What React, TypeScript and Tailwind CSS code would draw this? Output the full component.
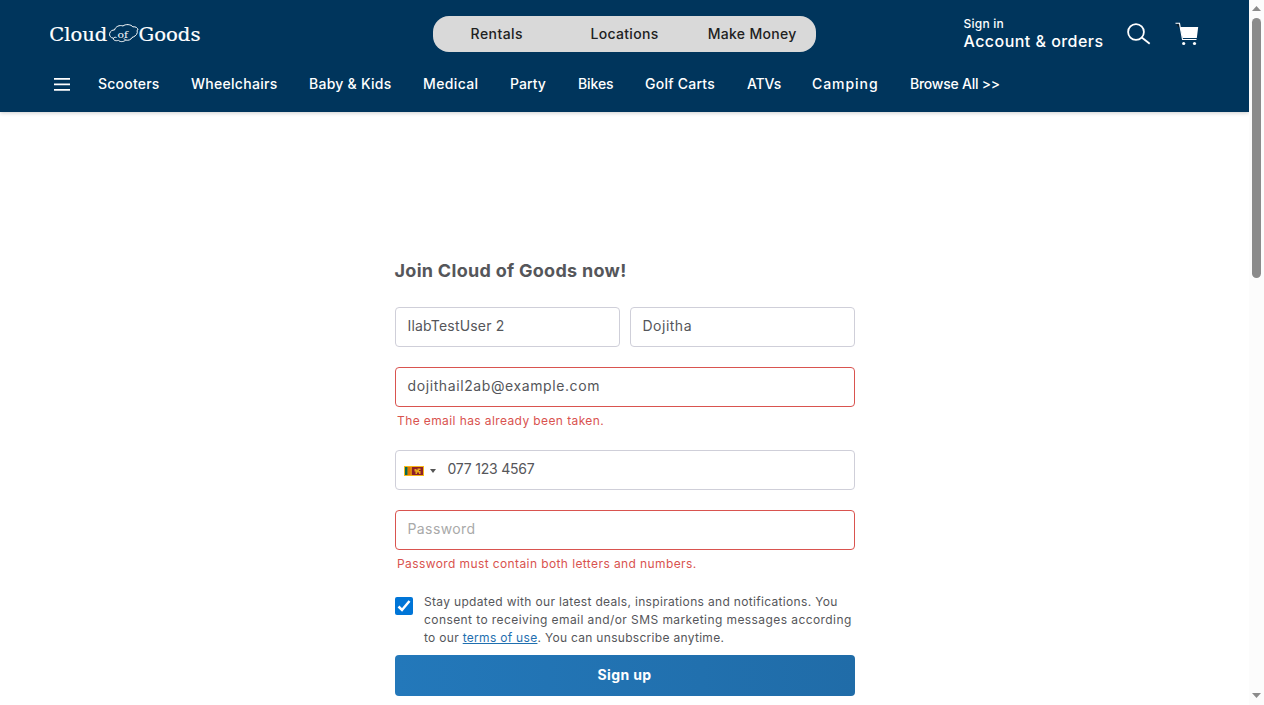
const categories = [
  { label: "Scooters", box: "w-[93px]", track: "tracking-[0.21px]" },
  { label: "Wheelchairs", box: "w-[118px]", track: "tracking-[0.28px]" },
  { label: "Baby & Kids", box: "w-[114px]", track: "tracking-[0.25px]" },
  { label: "Medical", box: "w-[87px]", track: "tracking-[0.37px]" },
  { label: "Party", box: "w-[68px]", track: "tracking-[0.07px]" },
  { label: "Bikes", box: "w-[67px]", track: "tracking-[-0.1px]" },
  { label: "Golf Carts", box: "w-[102px]", track: "tracking-[0.25px]" },
  { label: "ATVs", box: "w-[65px]", track: "tracking-[-0.17px]" },
  { label: "Camping", box: "w-[98px]", track: "tracking-[0.94px]" },
  { label: "Browse All >>", box: "w-[100px]", track: "tracking-[-0.24px]" },
];

const tabs = [
  { label: "Rentals", track: "tracking-[0.45px]" },
  { label: "Locations", track: "tracking-[0.31px]" },
  { label: "Make Money", track: "tracking-[0.31px]" },
];

function Logo() {
  return (
    <svg width="152" height="22" viewBox="0 0 152 22" fill="#fff" aria-label="Cloud of Goods">
      <g fontFamily="'DejaVu Serif', serif" fontSize="19" stroke="#fff" strokeWidth="0.2">
        <text x="-0.8" y="18" textLength="58" lengthAdjust="spacingAndGlyphs">Cloud</text>
        <text x="88.500" y="18" textLength="62" lengthAdjust="spacingAndGlyphs">Goods</text>
      </g>
      <text x="67.500" y="15" fontFamily="'DejaVu Serif', serif" fontSize="10" textLength="10.500" lengthAdjust="spacingAndGlyphs">of</text>
      <path
        d="M63.500 15.200C60.500 15 59 12.500 59.700 10.300C60.300 8 62.500 6.800 64.500 7C65.500 3.500 69.500 1.700 73 3C75.500 .8 81 1.300 82.800 3.800C86 3.500 87.500 4.800 88 6.800C86.800 6.200 87.300 9.500 87.300 9.500C86.800 12.500 84 13.700 82 14.500C81 17 78 17.700 75.700 17C73.500 19.200 69.500 19 68.500 17.300C66 18.200 63 17.500 63.500 15.200ZM63.500 15.200C64 14.200 65.500 14 66.500 14.500M75.700 17C75 16.800 74 16 74 15.300"
        fill="none"
        stroke="#fff"
        strokeWidth="1"
        strokeLinejoin="round"
      />
    </svg>
  );
}

function Header() {
  return (
    <header className="flex h-28 flex-col bg-[#00355c] text-white shadow-[0_1px_4px_rgba(0,0,0,0.2)]">
      <div className="flex h-[68px] items-center pl-[50px]">
        <div className="w-[383px]"><Logo /></div>
        <nav className="grid h-9 w-[383px] grid-cols-3 items-center rounded-[16px] bg-[#d9d9d9] text-center text-sm font-medium text-[#212121]">
          {tabs.map((t) => (
            <a key={t.label} className={`whitespace-nowrap ${t.track}`}>{t.label}</a>
          ))}
        </nav>
        <div className="ml-[147.500px] w-[163px] pb-1 font-medium whitespace-nowrap">
          <div className="text-xs leading-[18px] tracking-[0.23px]">Sign in</div>
          <div className="text-base leading-[17px] tracking-[0.46px]">Account & orders</div>
        </div>
        <svg width="24" height="24" viewBox="0 0 24 24" fill="none" stroke="#fff" strokeWidth="1.8">
          <circle cx="9" cy="10" r="7.900" />
          <path d="M14.800 15.500 22.700 21.800" />
        </svg>
        <svg className="ml-6" width="24" height="24" viewBox="0 0 24 24" fill="#fff">
          <path d="M5.200 5H23.200L21.800 16H7.500Z" />
          <path d="M.5 1.300H4.500L7.500 17.500H21.500" fill="none" stroke="#fff" strokeWidth="1.100" />
          <path d="M1.500 2.200H3.500L4.200 6Z" fill="#111" />
          <circle cx="8.700" cy="21.500" r="1.600" />
          <circle cx="19.500" cy="21.500" r="1.600" />
        </svg>
      </div>
      <div className="flex h-8 items-center pl-[54px]">
        <svg className="mr-7 shrink-0" width="16" height="14" viewBox="0 0 16 14" fill="#fff">
          <path d="M0 1h16v1.800H0zM0 6.500h16v1.800H0zM0 12h16v1.800H0z" />
        </svg>
        {categories.map((c) => (
          <a key={c.label} className={`shrink-0 text-sm font-medium whitespace-nowrap ${c.box} ${c.track}`}>{c.label}</a>
        ))}
      </div>
    </header>
  );
}

function Flag() {
  return (
    <svg width="20" height="10" viewBox="0 0 20 10">
      <path fill="#f7b718" d="M0 0h20v10H0z" />
      <path fill="#0a6b4f" d="M1 1h2.700v8H1z" />
      <path fill="#df7500" d="M3.700 1h3v8h-3z" />
      <path fill="#8d2029" d="M7.700 1H19v8H7.700z" />
      <path fill="#e9a91c" d="M10.500 3h2v1h1V2.500h3V4H15v1h1.500v3H15V6.500h-2V8h-1.500V5.500h-1z" />
    </svg>
  );
}

const field = "flex h-10 w-full items-center rounded-[4px] border px-3 pb-[2px] text-sm whitespace-nowrap";

function SignupForm() {
  return (
    <form className="flex w-[460px] flex-col text-[#55565a]">
      <h1 className="h-12 text-lg leading-6 font-bold tracking-[0.29px]">Join Cloud of Goods now!</h1>
      <div className="flex gap-[10px]">
        <div className={`${field} border-[#cfcfd9] tracking-[0.2px]`}>IlabTestUser 2</div>
        <div className={`${field} border-[#cfcfd9] tracking-[0.5px]`}>Dojitha</div>
      </div>
      <div className={`${field} mt-5 border-[#d9534f] tracking-[0.6px]`}>dojithail2ab@example.com</div>
      <p className="mt-[5px] h-[38px] pl-[2.500px] text-xs leading-[18px] tracking-[0.4px] text-[#d9534f]">The email has already been taken.</p>
      <div className={`${field} border-[#cfcfd9] pl-2`}>
        <div className="flex items-center pt-[3px]">
          <Flag />
          <svg className="ml-[6px]" width="6" height="4" viewBox="0 0 6 4"><path fill="#555" d="M0 0h6L3 4z" /></svg>
        </div>
        <span className="ml-3 tracking-[-0.22px]">077 123 4567</span>
      </div>
      <div className={`${field} mt-5 border-[#d9534f] tracking-[0.4px] text-[#a9a9a9]`}>Password</div>
      <p className="mt-[5px] h-[38px] pl-[2.500px] text-xs leading-[18px] tracking-[0.4px] text-[#d9534f]">Password must contain both letters and numbers.</p>
      <div className="flex h-[62px]">
        <svg className="mt-1 mr-[11.500px] shrink-0" width="18" height="18" viewBox="0 0 18 18">
          <rect width="18" height="18" rx="2" fill="#0075d7" />
          <path d="M3.500 9.500 7 13l7.500-9" fill="none" stroke="#fff" strokeWidth="2.500" />
        </svg>
        <div className="text-xs leading-[18px] whitespace-nowrap">
          <div className="tracking-[0.33px]">Stay updated with our latest deals, inspirations and notifications. You</div>
          <div className="tracking-[0.42px]">consent to receiving email and/or SMS marketing messages according</div>
          <div className="tracking-[0.3px]">to our <a className="text-[#1f6faf] underline">terms of use</a>. You can unsubscribe anytime.</div>
        </div>
      </div>
      <button type="button" className="h-[41px] rounded-[4px] bg-linear-to-r from-[#2378ba] to-[#206ca8] pb-[2px] text-sm font-bold tracking-[0.37px] text-white">Sign up</button>
    </form>
  );
}

export default function App() {
  return (
    <div className="flex h-[705px] w-[1264px] overflow-hidden bg-white font-['Inter',sans-serif]">
      <div className="w-[1249px] shrink-0">
        <Header />
        <main className="flex justify-center pt-[147px]"><SignupForm /></main>
      </div>
      <div className="flex w-[15px] flex-col items-center bg-[#fcfcfc]">
        <svg className="mt-[6px]" width="9" height="5" viewBox="0 0 9 5"><path fill="#8b8b8b" d="M4.500 0 9 5H0z" /></svg>
        <div className="mt-[7px] h-[260px] w-[9px] rounded-full bg-[#8b8b8b]" />
        <svg className="mt-auto mb-[7px]" width="9" height="5" viewBox="0 0 9 5"><path fill="#8b8b8b" d="M0 0h9L4.500 5z" /></svg>
      </div>
    </div>
  );
}
